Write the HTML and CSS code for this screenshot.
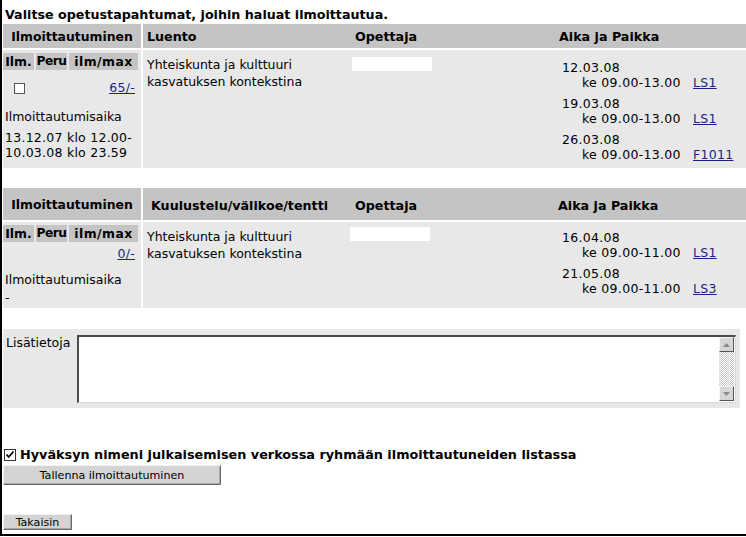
FILE: index.html
```html
<!DOCTYPE html>
<html>
<head>
<meta charset="utf-8">
<link rel="stylesheet" href="styles.css">
</head>
<body>
<div class="page">
  <div class="title">Valitse opetustapahtumat, joihin haluat ilmoittautua.</div>

  <div class="block block1">
    <div class="hcell c1 h-left">Ilmoittautuminen</div>
    <div class="hcell cols">
      <div class="hc hc-a">Luento</div>
      <div class="hc">Opettaja</div>
      <div class="hc hc-c">Aika ja Paikka</div>
    </div>
    <div class="dcell c1">
      <div class="mini">
        <div class="mh">Ilm.</div><div class="mh mh-peru">Peru</div><div class="mh mh-max">ilm/max</div>
        <div class="mcb"><span class="cb"></span></div><div></div><div class="mcount num"><a href="#">65/-</a></div>
      </div>
      <div class="period-label">Ilmoittautumisaika</div>
      <div class="period num">13.12.07 klo 12.00-<br>10.03.08 klo 23.59</div>
    </div>
    <div class="dcell cols">
      <div class="dc dc-a">Yhteiskunta ja kulttuuri<br>kasvatuksen kontekstina</div>
      <div class="dc dc-b"><span class="redact"></span></div>
      <div class="dc dc-c num">
        <div class="slot"><div class="date">12.03.08</div><div class="time"><span class="tt">ke 09.00-13.00</span><a href="#">LS1</a></div></div>
        <div class="slot"><div class="date">19.03.08</div><div class="time"><span class="tt">ke 09.00-13.00</span><a href="#">LS1</a></div></div>
        <div class="slot"><div class="date">26.03.08</div><div class="time"><span class="tt">ke 09.00-13.00</span><a href="#">F1011</a></div></div>
      </div>
    </div>
  </div>

  <div class="block block2">
    <div class="hcell c1 h-center">Ilmoittautuminen</div>
    <div class="hcell cols cols2">
      <div class="hc hc-a2">Kuulustelu/välikoe/tentti</div>
      <div class="hc">Opettaja</div>
      <div class="hc hc-c2">Aika ja Paikka</div>
    </div>
    <div class="dcell c1">
      <div class="mini">
        <div class="mh">Ilm.</div><div class="mh mh-peru">Peru</div><div class="mh mh-max">ilm/max</div>
        <div></div><div></div><div class="mcount mcount2 num"><a href="#">0/-</a></div>
      </div>
      <div class="period-label2">Ilmoittautumisaika</div>
      <div class="period2">-</div>
    </div>
    <div class="dcell cols">
      <div class="dc dc-a">Yhteiskunta ja kulttuuri<br>kasvatuksen kontekstina</div>
      <div class="dc dc-b"><span class="redact redact2"></span></div>
      <div class="dc dc-c dc-c2 num">
        <div class="slot"><div class="date">16.04.08</div><div class="time"><span class="tt">ke 09.00-11.00</span><a href="#">LS1</a></div></div>
        <div class="slot"><div class="date">21.05.08</div><div class="time"><span class="tt">ke 09.00-11.00</span><a href="#">LS3</a></div></div>
      </div>
    </div>
  </div>

  <div class="info">
    <div class="info-label">Lisätietoja</div>
    <div class="tbox">
      <textarea class="ta"></textarea>
      <div class="sbar">
        <div class="sbtn"><svg width="7" height="4" viewBox="0 0 7 4"><path d="M3.5 0L7 4H0z" fill="#8a8a8a"/></svg></div>
        <div class="strack"></div>
        <div class="sbtn"><svg width="7" height="4" viewBox="0 0 7 4"><path d="M0 0h7L3.5 4z" fill="#8a8a8a"/></svg></div>
      </div>
    </div>
  </div>

  <div class="accept">
    <svg class="ccb" width="12" height="12" viewBox="0 0 12 12"><rect x="0.5" y="0.5" width="11" height="11" fill="#fff" stroke="#333"/><path d="M2.5 5.5l2.2 2.5 4.8-5.5" fill="none" stroke="#000" stroke-width="1.8"/></svg>
    <span>Hyväksyn nimeni julkaisemisen verkossa ryhmään ilmoittautuneiden listassa</span>
  </div>
  <div><button class="btn btn-save">Tallenna ilmoittautuminen</button></div>
  <div><button class="btn btn-back">Takaisin</button></div>
</div>
</body>
</html>
```
FILE: styles.css
```css
html, body { margin: 0; padding: 0; }
body {
  width: 746px;
  height: 537px;
  overflow: hidden;
  font-family: "DejaVu Sans", Verdana, sans-serif;
  font-size: 12.5px;
  color: #000;
  background: #fff;
}
.page {
  box-sizing: border-box;
  height: 536px;
  border-left: 2px solid #000;
  border-bottom: 2px solid #000;
  padding-left: 1px;
}
a { color: #1e1e8c; text-decoration: underline; }
.num { letter-spacing: 0.3px; }

.title {
  font-weight: bold;
  font-size: 12.7px;
  line-height: 16px;
  padding: 7px 0 0 2px;
  height: 17px;
}

.block {
  display: grid;
  grid-template-columns: 138px 1fr;
  gap: 2px;
  margin-right: -10px;
}
.hcell { background: #c4c4c4; font-weight: bold; font-size: 12.4px; }
.dcell { background: #e8e8e8; }
.block1 { grid-template-rows: 24px 118px; }
.block2 { grid-template-rows: 32px 86px; margin-top: 20px; }

.h-left, .h-center { display: flex; align-items: center; justify-content: center; }
.cols { display: grid; grid-template-columns: 208px 204px 1fr; }
.hc { display: flex; align-items: center; padding-left: 4px; font-size: 12.7px; }
.cols2 .hc { padding-top: 3px; }
.hc-a2 { padding-left: 8px; }
.hc-c2 { padding-left: 3px; }

.mini {
  display: grid;
  grid-template-columns: 31px 31px 1fr;
  grid-template-rows: 17px 26px;
  column-gap: 2px;
  row-gap: 1px;
  margin: 3px 3px 0 0;
}
.mh { background: #c4c4c4; font-weight: bold; font-size: 12.4px; line-height: 17px; text-align: center; white-space: nowrap; }
.mh-peru { letter-spacing: -0.5px; font-size: 12.2px; }
.mh-max { letter-spacing: 0.5px; }
.mcb { display: flex; justify-content: center; align-items: flex-start; }
.cb { width: 9px; height: 9px; border: 1px solid #555; background: #fff; margin: 12px 0 0 1px; }
.mcount { text-align: right; padding: 9px 3px 0 0; line-height: 16px; }
.mcount2 { padding-top: 3px; }
.period-label { padding: 12px 0 0 2px; line-height: 16px; }
.period { padding: 5px 0 0 2px; line-height: 15px; letter-spacing: 0.25px; }
.period-label2 { padding: 3px 0 0 2px; line-height: 16px; }
.period2 { padding: 2px 0 0 2px; line-height: 16px; }

.dc { padding-top: 6px; line-height: 17px; }
.dc-a { padding-left: 4px; }
.redact { display: block; width: 80px; height: 14px; background: #fff; margin: 1px 0 0 1px; }
.redact2 { margin-top: -1px; margin-left: -1px; }
.dc-c { padding: 10px 0 0 7px; line-height: 15px; }
.dc-c2 { padding-top: 8px; }
.slot { margin-bottom: 5px; }
.date { line-height: 15px; }
.time { display: flex; padding-left: 20px; line-height: 16px; }
.tt { width: 111px; flex: none; }

.info {
  display: flex;
  align-items: flex-start;
  background: #e8e8e8;
  margin-top: 21px;
  width: 737px;
  height: 79px;
  box-sizing: border-box;
  padding-top: 6px;
}
.info-label { width: 74px; padding-left: 3px; box-sizing: border-box; line-height: 16px; }
.tbox {
  display: flex;
  width: 659px;
  height: 68px;
  box-sizing: border-box;
  border-top: 2px solid #4a4a4a;
  border-left: 2px solid #4a4a4a;
  border-bottom: 1px solid #d8d8d8;
  border-right: 1px solid #d8d8d8;
  background: #fff;
}
.ta { flex: 1; border: 0; resize: none; outline: none; margin: 0; padding: 0; background: #fff; }
.sbar { width: 15px; display: flex; flex-direction: column; margin: 0 1px 1px 0; }
.sbtn {
  height: 15px;
  box-sizing: border-box;
  background: #d6d6d6;
  border-top: 1px solid #f4f4f4;
  border-left: 1px solid #f4f4f4;
  border-right: 1px solid #555;
  border-bottom: 1px solid #555;
  display: flex; align-items: center; justify-content: center;
}
.strack {
  flex: 1;
  background: repeating-conic-gradient(#fff 0 25%, #c8c8c8 0 50%) 0 0 / 2px 2px;
}

.accept {
  display: flex;
  align-items: center;
  margin-top: 38px;
  font-weight: bold;
  font-size: 12.8px;
  line-height: 17px;
  height: 17px;
}
.ccb { margin: 0 4px 0 1px; }

.btn {
  font-family: "DejaVu Sans", Verdana, sans-serif;
  font-size: 11.1px;
  background: #d4d4d4;
  border: 1px solid;
  border-color: #f2f2f2 #6a6a6a #6a6a6a #f2f2f2;
  box-shadow: inset -1px -1px 0 #a8a8a8;
  padding: 0;
  margin: 0;
  color: #000;
}
.btn-save { width: 218px; height: 20px; margin-top: 2px; }
.btn-back { width: 69px; height: 16px; margin-top: 29px; }
```
